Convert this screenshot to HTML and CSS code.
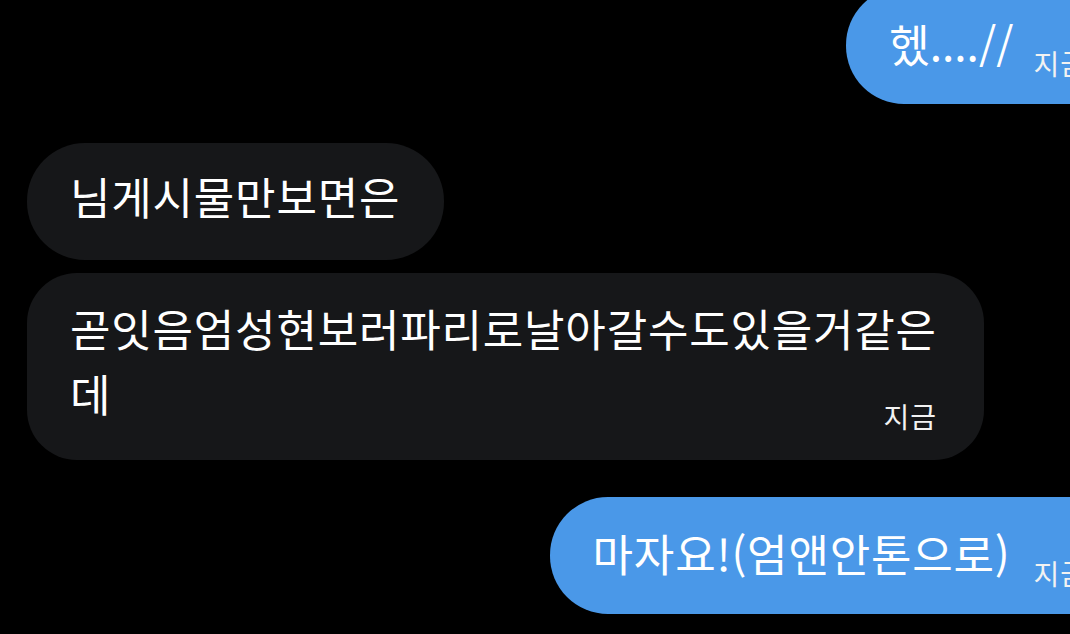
FILE: index.html
```html
<!DOCTYPE html>
<html lang="ko">
<head>
<meta charset="utf-8">
<link rel="stylesheet" href="styles.css">
</head>
<body>
<div class="chat">
  <div class="row sent first">
    <div class="bubble blue"><span class="text short">헸....//</span><span class="time">지금</span></div>
  </div>
  <div class="row recv">
    <div class="bubble dark single"><span class="text">님게시물만보면은</span></div>
  </div>
  <div class="row recv">
    <div class="bubble dark multi"><p class="text">곧잇음엄성현보러파리로날아갈수도있을거같은데</p><span class="time">지금</span></div>
  </div>
  <div class="row sent">
    <div class="bubble blue"><span class="text">마자요!(엄앤안톤으로)</span><span class="time">지금</span></div>
  </div>
</div>
</body>
</html>
```
FILE: styles.css
```css
html, body {
  margin: 0;
  padding: 0;
  background: #000;
  overflow: hidden;
  width: 1070px;
  height: 634px;
}
body {
  font-family: "Noto Sans CJK KR", "Noto Sans", sans-serif;
  color: #fff;
}
.chat {
  display: flex;
  flex-direction: column;
  padding: 0 0 0 27px;
  margin-top: -13px;
}
.row {
  display: flex;
}
.row.sent {
  justify-content: flex-end;
  margin-right: -80px;
}
.row.recv {
  justify-content: flex-start;
}
.row.first + .row {
  margin-top: 39px;
}
.row.recv + .row.recv {
  margin-top: 13px;
}
.row.recv + .row.sent {
  margin-top: 37px;
}
.bubble {
  box-sizing: border-box;
}
.text {
  font-size: 44px;
  letter-spacing: 0.8px;
  line-height: 65px;
  margin: 0;
}
.blue .text.short {
  letter-spacing: 0px;
}
.time {
  font-size: 28px;
  letter-spacing: 1px;
  line-height: 36px;
  color: #f2f2f2;
}
.blue {
  background: #4a98e8;
  height: 117px;
  border-radius: 58px 0 0 58px;
  display: flex;
  align-items: flex-end;
  padding: 0 63px 23px 43px;
  gap: 23px;
}
.blue .text {
  padding-bottom: 5px;
}
.blue .text.short {
  margin-right: -3px;
}
.dark {
  background: #161719;
}
.single {
  height: 117px;
  border-radius: 58px;
  padding: 21px 44px 0 43px;
}
.multi {
  width: 957px;
  border-radius: 50px;
  padding: 23px 44px 26px 43px;
  display: flex;
  flex-wrap: wrap;
  justify-content: flex-end;
}
.multi .text {
  width: 100%;
}
.multi .time {
  margin-top: -28px;
  margin-right: 3px;
}
```
